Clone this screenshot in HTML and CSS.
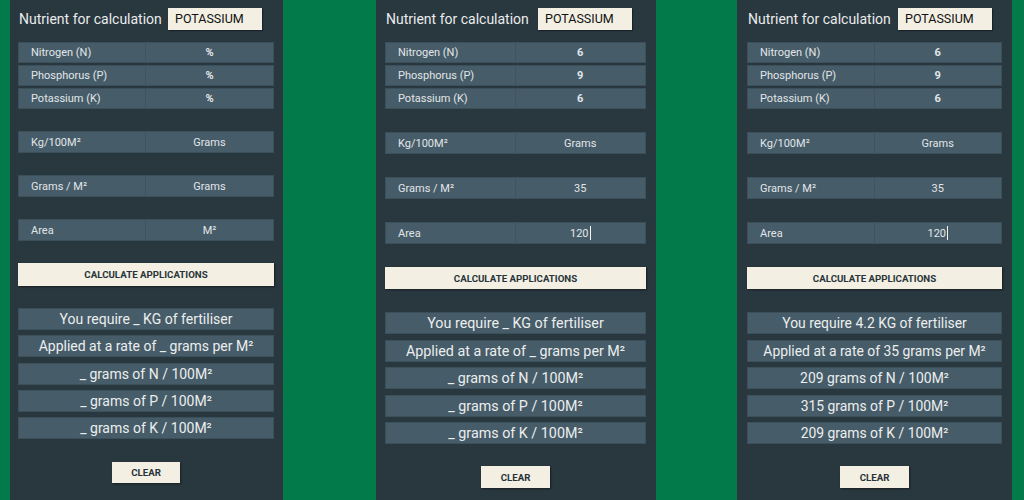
FILE: index.html
```html
<!DOCTYPE html>
<html>
<head>
    <title>Fertiliser Calculator</title>
    <link rel="stylesheet" href="styles.css">
</head>
<body>

<div class="screens">

    <!-- empty form -->
    <div class="phone p1">
        <div class="head">
            <span class="head-label">Nutrient for calculation</span>
            <div class="picker">POTASSIUM</div>
        </div>
        <div class="npk">
            <div class="row"><span class="lbl">Nitrogen (N)</span><span class="val bold">%</span></div>
            <div class="row"><span class="lbl">Phosphorus (P)</span><span class="val bold">%</span></div>
            <div class="row"><span class="lbl">Potassium (K)</span><span class="val bold">%</span></div>
        </div>
        <div class="row single"><span class="lbl">Kg/100M²</span><span class="val">Grams</span></div>
        <div class="row single"><span class="lbl">Grams / M²</span><span class="val">Grams</span></div>
        <div class="row single"><span class="lbl">Area</span><span class="val">M²</span></div>
        <button class="btn calc">CALCULATE APPLICATIONS</button>
        <div class="results">
            <div class="result">You require _ KG of fertiliser</div>
            <div class="result">Applied at a rate of _ grams per M²</div>
            <div class="result">_ grams of N / 100M²</div>
            <div class="result">_ grams of P / 100M²</div>
            <div class="result">_ grams of K / 100M²</div>
        </div>
        <button class="btn clear">CLEAR</button>
    </div>

    <!-- values entered -->
    <div class="phone p2 big">
        <div class="head">
            <span class="head-label">Nutrient for calculation</span>
            <div class="picker">POTASSIUM</div>
        </div>
        <div class="npk">
            <div class="row"><span class="lbl">Nitrogen (N)</span><span class="val bold">6</span></div>
            <div class="row"><span class="lbl">Phosphorus (P)</span><span class="val bold">9</span></div>
            <div class="row"><span class="lbl">Potassium (K)</span><span class="val bold">6</span></div>
        </div>
        <div class="row single"><span class="lbl">Kg/100M²</span><span class="val">Grams</span></div>
        <div class="row single"><span class="lbl">Grams / M²</span><span class="val">35</span></div>
        <div class="row single"><span class="lbl">Area</span><span class="val">120<span class="caret"></span></span></div>
        <button class="btn calc">CALCULATE APPLICATIONS</button>
        <div class="results">
            <div class="result">You require _ KG of fertiliser</div>
            <div class="result">Applied at a rate of _ grams per M²</div>
            <div class="result">_ grams of N / 100M²</div>
            <div class="result">_ grams of P / 100M²</div>
            <div class="result">_ grams of K / 100M²</div>
        </div>
        <button class="btn clear">CLEAR</button>
    </div>

    <!-- calculated -->
    <div class="phone p3 big">
        <div class="head">
            <span class="head-label">Nutrient for calculation</span>
            <div class="picker">POTASSIUM</div>
        </div>
        <div class="npk">
            <div class="row"><span class="lbl">Nitrogen (N)</span><span class="val bold">6</span></div>
            <div class="row"><span class="lbl">Phosphorus (P)</span><span class="val bold">9</span></div>
            <div class="row"><span class="lbl">Potassium (K)</span><span class="val bold">6</span></div>
        </div>
        <div class="row single"><span class="lbl">Kg/100M²</span><span class="val">Grams</span></div>
        <div class="row single"><span class="lbl">Grams / M²</span><span class="val">35</span></div>
        <div class="row single"><span class="lbl">Area</span><span class="val">120<span class="caret"></span></span></div>
        <button class="btn calc">CALCULATE APPLICATIONS</button>
        <div class="results">
            <div class="result">You require 4.2 KG of fertiliser</div>
            <div class="result">Applied at a rate of 35 grams per M²</div>
            <div class="result">209 grams of N / 100M²</div>
            <div class="result">315 grams of P / 100M²</div>
            <div class="result">209 grams of K / 100M²</div>
        </div>
        <button class="btn clear">CLEAR</button>
    </div>

</div>

</body>
</html>
```

FILE: styles.css
```css
body {
    margin: 0;
    padding: 0;
    background-color: #027a4a;
    font-family: Roboto, "Noto Sans", sans-serif;
}

.screens {
    display: flex;
    height: 500px;
}

/* one phone screen */
.phone {
    background-color: #29373f;
    display: flex;
    flex-direction: column;
    box-sizing: border-box;
    height: 500px;
    --gap: 22px;
    --res-gap: 5.25px;
    --res-size: 14px;
}

.p1 {
    width: 273px;
    margin-left: 10px;
    padding: 0 9px 0 8px;
}
.p2 {
    width: 280px;
    margin-left: 93px;
    padding: 0 10px 0 9px;
}
.p3 {
    width: 275px;
    margin-left: 81px;
    padding: 0 10px 0 10px;
}

.big {
    --gap: 23px;
    --res-gap: 5.5px;
    --res-size: 14.3px;
}
.p3 {
    --res-size: 13.9px;
}

.head {
    display: flex;
    align-items: center;
    height: 22px;
    margin-top: 8px;
    padding-left: 1px;
}
.head-label {
    color: #e9ecec;
    font-size: 14px;
    width: 149px;
}
.p2 .head-label { width: 152px; }
.p3 .head-label { width: 150px; }

.picker {
    background-color: #f3efe3;
    color: #111;
    font-size: 12.5px;
    width: 94px;
    height: 22px;
    line-height: 22px;
    box-sizing: border-box;
    padding-left: 7px;
    box-shadow: 1px 1px 1px rgba(0, 0, 0, 0.35);
}

.npk {
    display: flex;
    flex-direction: column;
    gap: 2px;
    margin-top: 12px;
}

.row {
    display: grid;
    grid-template-columns: 1fr 1fr;
    height: 21px;
    background-color: #465c69;
    border: 1px solid #3c505c;
    box-sizing: border-box;
    color: #e2e6e8;
    font-size: 11px;
}
.row.single {
    height: 22px;
    margin-top: var(--gap);
}

.lbl {
    display: flex;
    align-items: center;
    padding-left: 12px;
    border-right: 1px solid #40545f;
}
.val {
    display: flex;
    align-items: center;
    justify-content: center;
}
.bold {
    font-weight: bold;
}

.caret {
    display: inline-block;
    width: 1px;
    height: 14px;
    background-color: #f4f4f4;
    margin-left: 1px;
}

.btn {
    font-family: Roboto, "Noto Sans", sans-serif;
    background-color: #f3efe3;
    color: #28343a;
    font-weight: bold;
    font-size: 9.7px;
    border: none;
    padding: 0;
    box-shadow: 1px 1px 2px rgba(0, 0, 0, 0.45);
}
.calc {
    height: 23px;
    margin-top: var(--gap);
}
.big .calc {
    height: 22px;
    margin-top: 23px;
}
.clear {
    align-self: center;
    width: 68px;
    height: 21px;
    margin-top: 23px;
}
.big .clear {
    width: 69px;
    height: 22px;
    margin-top: 22px;
}

.results {
    display: flex;
    flex-direction: column;
    gap: var(--res-gap);
    margin-top: var(--gap);
}
.result {
    height: 22px;
    background-color: #465c69;
    border: 1px solid #3c505c;
    box-sizing: border-box;
    color: #eceeee;
    font-size: var(--res-size);
    display: flex;
    align-items: center;
    justify-content: center;
}
```
